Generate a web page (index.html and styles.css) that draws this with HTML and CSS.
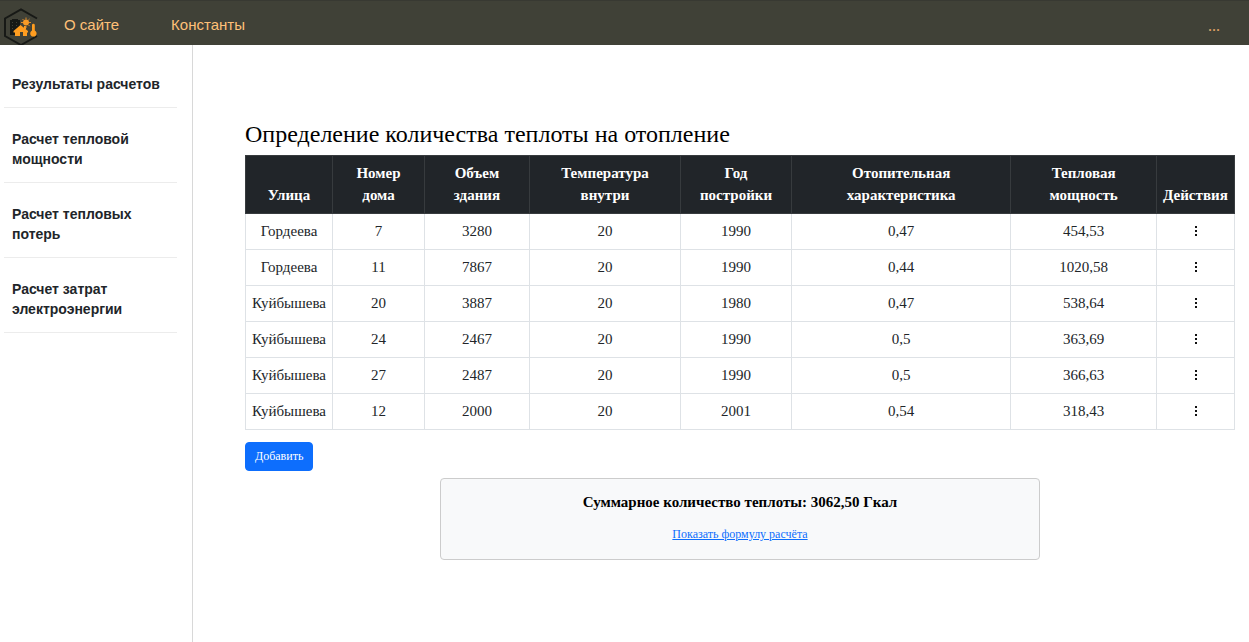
FILE: index.html
```html
<!DOCTYPE html>
<html lang="ru">
<head>
<meta charset="utf-8">
<meta name="viewport" content="width=device-width, initial-scale=1">
<title>Определение количества теплоты на отопление</title>
<link rel="stylesheet" href="styles.css">
</head>
<body>
<header class="topbar">
  <a class="logo" href="#" aria-label="Главная">
    <svg width="36" height="38" viewBox="0 0 36 38" fill="none" aria-hidden="true">
      <path d="M33 10.500 17 1.500 1 10.500v17.500L17 37l16-9" stroke="#171916" stroke-width="2"/>
      <path fill="#171916" d="M6 12h2v-1h6v1h2v9l-5 6H6z"/>
      <path fill="#404137" d="M8 14h1v1H8zM12 14h1v1h-1zM8 17h1v1H8zM12 17h1v1h-1zM8 20h1v1H8z"/>
      <path fill="#ff9d20" d="m16.500 17 7.500 6v1.500h-1V28h-4v-4h-3v4h-5v-3.500H9.500V23z"/>
      <path fill="#ff9d20" d="M20 18h2v3h-2z"/>
      <circle cx="22" cy="14.500" r="3" fill="#f79a26"/>
      <path stroke="#dd8b2a" stroke-width="1" d="M22 9.500v2M22 18v2M17 14.500h2M25 14.500h2M18.500 11l1.200 1.200M25.500 11l-1.200 1.200M24.500 17l1.200 1.200"/>
      <path fill="#ff9d20" d="M28 17.200a1.400 1.400 0 0 1 2.800 0v5.300a3.200 3.200 0 1 1-2.800 0z"/>
    </svg>
  </a>
  <nav class="menu">
    <a href="#">О сайте</a>
    <a href="#">Константы</a>
  </nav>
  <button class="more" type="button" aria-label="Ещё">...</button>
</header>
<div class="layout">
  <nav class="sidebar">
    <a href="#">Результаты расчетов</a>
    <a href="#">Расчет тепловой мощности</a>
    <a href="#">Расчет тепловых потерь</a>
    <a href="#">Расчет затрат электроэнергии</a>
  </nav>
  <main class="content">
    <h1>Определение количества теплоты на отопление</h1>
    <table class="heat">
      <colgroup>
        <col class="c-street"><col class="c-house"><col class="c-volume"><col class="c-temp"><col class="c-year"><col class="c-char"><col class="c-power"><col class="c-actions">
      </colgroup>
      <thead>
        <tr><th>Улица</th><th>Номер<br>дома</th><th>Объем<br>здания</th><th>Температура<br>внутри</th><th>Год<br>постройки</th><th>Отопительная<br>характеристика</th><th>Тепловая<br>мощность</th><th>Действия</th></tr>
      </thead>
      <tbody>
        <tr><td>Гордеева</td><td>7</td><td>3280</td><td>20</td><td>1990</td><td>0,47</td><td>454,53</td><td><button class="dots" type="button" aria-label="Действия"><svg width="4" height="12" viewBox="0 0 4 12"><path d="M2 1h2v2H2zM2 5h2v2H2zM2 9h2v2H2z"/></svg></button></td></tr>
        <tr><td>Гордеева</td><td>11</td><td>7867</td><td>20</td><td>1990</td><td>0,44</td><td>1020,58</td><td><button class="dots" type="button" aria-label="Действия"><svg width="4" height="12" viewBox="0 0 4 12"><path d="M2 1h2v2H2zM2 5h2v2H2zM2 9h2v2H2z"/></svg></button></td></tr>
        <tr><td>Куйбышева</td><td>20</td><td>3887</td><td>20</td><td>1980</td><td>0,47</td><td>538,64</td><td><button class="dots" type="button" aria-label="Действия"><svg width="4" height="12" viewBox="0 0 4 12"><path d="M2 1h2v2H2zM2 5h2v2H2zM2 9h2v2H2z"/></svg></button></td></tr>
        <tr><td>Куйбышева</td><td>24</td><td>2467</td><td>20</td><td>1990</td><td>0,5</td><td>363,69</td><td><button class="dots" type="button" aria-label="Действия"><svg width="4" height="12" viewBox="0 0 4 12"><path d="M2 1h2v2H2zM2 5h2v2H2zM2 9h2v2H2z"/></svg></button></td></tr>
        <tr><td>Куйбышева</td><td>27</td><td>2487</td><td>20</td><td>1990</td><td>0,5</td><td>366,63</td><td><button class="dots" type="button" aria-label="Действия"><svg width="4" height="12" viewBox="0 0 4 12"><path d="M2 1h2v2H2zM2 5h2v2H2zM2 9h2v2H2z"/></svg></button></td></tr>
        <tr><td>Куйбышева</td><td>12</td><td>2000</td><td>20</td><td>2001</td><td>0,54</td><td>318,43</td><td><button class="dots" type="button" aria-label="Действия"><svg width="4" height="12" viewBox="0 0 4 12"><path d="M2 1h2v2H2zM2 5h2v2H2zM2 9h2v2H2z"/></svg></button></td></tr>
      </tbody>
    </table>
    <button class="add" type="button">Добавить</button>
    <section class="summary">
      <strong>Суммарное количество теплоты: 3062,50 Гкал</strong>
      <a href="#">Показать формулу расчёта</a>
    </section>
  </main>
</div>
</body>
</html>
```
FILE: styles.css
```css
* { box-sizing: border-box; }
body {
  margin: 0;
  min-height: 100vh;
  display: flex;
  flex-direction: column;
  background: #fff;
  color: #212529;
  font-family: "Liberation Serif", "Times New Roman", serif;
  font-size: 15px;
}
button { font-family: inherit; cursor: pointer; }
.topbar {
  display: flex;
  align-items: center;
  height: 45px;
  padding: 0 25px 0 4px;
  border-top: 1px solid #383932;
  background: #404137;
  overflow: hidden;
}
.logo { display: flex; padding-top: 8px; }
.menu {
  display: flex;
  flex: 1;
  gap: 52px;
  padding: 4px 24px 0;
  font: 15px/20px "Liberation Sans", Arial, sans-serif;
}
.menu a { color: #ffc078; text-decoration: none; }
.more {
  padding: 6px 4px 0;
  border: 0;
  background: none;
  color: #e0a569;
  font: 16px/20px "Liberation Serif", "Times New Roman", serif;
}
.layout { display: flex; flex: 1; }
.sidebar {
  flex: none;
  width: 193px;
  padding: 8px 15px 0 4px;
  border-right: 1px solid #d8d8d8;
  font: bold 14px/20px "Liberation Sans", Arial, sans-serif;
}
.sidebar a {
  display: block;
  padding: 21px 16px 13px 8px;
  border-bottom: 1px solid #ececec;
  color: #212529;
  text-decoration: none;
}
.content {
  display: flex;
  flex: 1;
  flex-direction: column;
  align-items: flex-start;
  min-width: 0;
  padding: 74px 14px 24px 52px;
}
h1 {
  margin: 0 0 6px;
  color: #000;
  font-size: 24px;
  font-weight: 400;
  line-height: 30px;
}
.heat {
  width: 100%;
  border-collapse: collapse;
  text-align: center;
}
.heat th {
  padding: 6px 6px 7px;
  border: 1px solid #373b3e;
  background: #212529;
  color: #fff;
  line-height: 22px;
  vertical-align: bottom;
}
.heat td {
  padding: 6px;
  border: 1px solid #dee2e6;
  line-height: 23px;
}
.c-street { width: 8.8%; }
.c-house { width: 9.3%; }
.c-volume { width: 10.6%; }
.c-temp { width: 15.3%; }
.c-year { width: 11.2%; }
.c-char { width: 22.2%; }
.c-power { width: 14.7%; }
.c-actions { width: 7.9%; }
.dots {
  padding: 0;
  border: 0;
  background: none;
  line-height: 12px;
  vertical-align: -1px;
}
.dots svg { display: block; fill: #111; }
.add {
  margin-top: 12px;
  padding: 4px 9px;
  border: 1px solid #0d6efd;
  border-radius: 4px;
  background: #0d6efd;
  color: #fff;
  font-size: 12px;
  line-height: 19px;
}
.summary {
  display: flex;
  flex-direction: column;
  align-self: center;
  align-items: center;
  gap: 12px;
  width: 100%;
  max-width: 600px;
  margin-top: 7px;
  padding: 12px 16px 16px;
  border: 1px solid #ccc;
  border-radius: 4px;
  background: #f8f9fa;
  color: #000;
  line-height: 22px;
}
.summary a {
  color: #0d6efd;
  font-size: 12px;
  line-height: 18px;
}
```
